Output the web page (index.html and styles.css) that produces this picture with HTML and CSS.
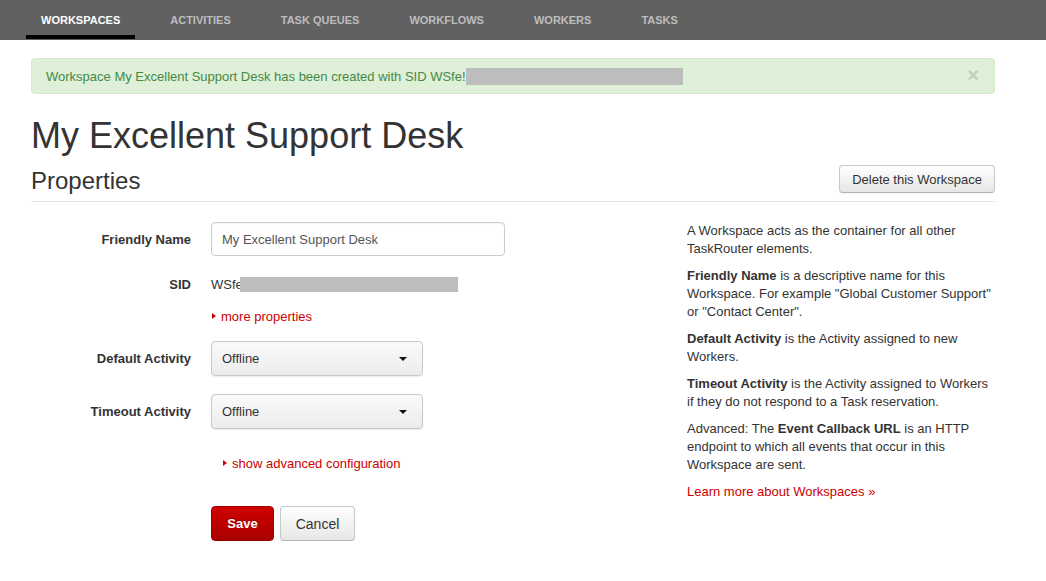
FILE: index.html
```html
<!DOCTYPE html>
<html>
<head>
<meta charset="utf-8">
<link rel="stylesheet" href="styles.css">
</head>
<body>
<nav class="topnav">
  <a class="nav-item active">Workspaces</a>
  <a class="nav-item">Activities</a>
  <a class="nav-item">Task Queues</a>
  <a class="nav-item">Workflows</a>
  <a class="nav-item">Workers</a>
  <a class="nav-item">Tasks</a>
</nav>
<main class="container">
  <div class="alert">
    <span class="alert-text">Workspace My Excellent Support Desk has been created with SID WSfe!</span><span class="redact redact-alert"></span>
    <span class="alert-close">×</span>
  </div>
  <h1 class="title">My Excellent Support Desk</h1>
  <div class="section-head">
    <h2 class="section-title">Properties</h2>
    <button class="btn btn-default btn-delete">Delete this Workspace</button>
  </div>
  <div class="columns">
    <form class="form">
      <div class="row row-name">
        <label class="label">Friendly Name</label>
        <input class="input" type="text" value="My Excellent Support Desk">
      </div>
      <div class="row row-sid">
        <span class="label">SID</span>
        <span class="sid">WSfe<span class="redact redact-sid"></span></span>
      </div>
      <div class="row row-more">
        <span class="label"></span>
        <a class="toggle"><span class="tri"></span>more properties</a>
      </div>
      <div class="row row-default">
        <label class="label">Default Activity</label>
        <div class="select"><span>Offline</span><span class="caret"></span></div>
      </div>
      <div class="row row-timeout">
        <label class="label">Timeout Activity</label>
        <div class="select"><span>Offline</span><span class="caret"></span></div>
      </div>
      <div class="row row-adv">
        <span class="label"></span>
        <a class="toggle toggle-adv"><span class="tri"></span>show advanced configuration</a>
      </div>
      <div class="row row-actions">
        <span class="label"></span>
        <button type="button" class="btn btn-primary">Save</button>
        <button type="button" class="btn btn-default btn-cancel">Cancel</button>
      </div>
    </form>
    <aside class="help">
      <p>A Workspace acts as the container for all other TaskRouter elements.</p>
      <p><b>Friendly Name</b> is a descriptive name for this Workspace. For example "Global Customer Support" or "Contact Center".</p>
      <p><b>Default Activity</b> is the Activity assigned to new Workers.</p>
      <p><b>Timeout Activity</b> is the Activity assigned to Workers if they do not respond to a Task reservation.</p>
      <p>Advanced: The <b>Event Callback URL</b> is an HTTP endpoint to which all events that occur in this Workspace are sent.</p>
      <p><a class="link">Learn more about Workspaces »</a></p>
    </aside>
  </div>
</main>
</body>
</html>
```
FILE: styles.css
```css
* { box-sizing: border-box; }
body {
  margin: 0;
  font-family: "Liberation Sans", Arial, sans-serif;
  font-size: 13px;
  color: #333;
  background: #fff;
}
.topnav {
  height: 40px;
  background: #616161;
  display: flex;
  padding-left: 26px;
}
.nav-item {
  display: block;
  padding: 14px 15px 0;
  margin-right: 20px;
  font-size: 11px;
  font-weight: bold;
  text-transform: uppercase;
  color: #bdbdbd;
  height: 40px;
  line-height: 12px;
}
.nav-item.active {
  color: #fff;
  border-bottom: 4px solid #000;
  height: 39px;
}
.container {
  width: 964px;
  margin-left: 31px;
  padding-top: 18px;
}
.alert {
  position: relative;
  height: 36px;
  background: #dff0d8;
  border: 1px solid #d6e9c6;
  border-radius: 4px;
  color: #468847;
  padding: 0 14px;
  display: flex;
  align-items: center;
}
.redact { display: inline-block; background: #bdbdbd; }
.redact-alert { width: 217px; height: 17px; margin-top: 1px; }
.alert-close {
  position: absolute;
  right: 15px;
  top: 5px;
  font-size: 20px;
  font-weight: bold;
  color: #c3cfbf;
}
.title {
  margin: 20px 0 0;
  font-size: 36px;
  font-weight: normal;
  line-height: 44px;
  color: #333;
}
.section-head {
  display: flex;
  justify-content: space-between;
  align-items: flex-start;
  margin-top: 6px;
  padding-bottom: 5px;
  border-bottom: 1px solid #e5e5e5;
}
.section-title {
  margin: 0;
  padding-top: 2px;
  font-size: 24px;
  font-weight: normal;
  line-height: 30px;
}
.btn {
  font-family: "Liberation Sans", Arial, sans-serif;
  font-size: 13px;
  border-radius: 4px;
  cursor: pointer;
}
.btn-default {
  height: 28px;
  padding: 0 12px;
  color: #333;
  background: linear-gradient(#ffffff, #e6e6e6);
  border: 1px solid #c8c8c8;
  border-bottom-color: #b3b3b3;
  box-shadow: 0 1px 1px rgba(0,0,0,0.05);
}
.btn-delete { margin-top: 1px; }
.columns {
  display: flex;
  margin-top: 20px;
}
.form { width: 656px; }
.row { display: flex; align-items: center; }
.label {
  width: 160px;
  margin-right: 20px;
  text-align: right;
  font-weight: bold;
  color: #333;
}
.input {
  width: 294px;
  height: 34px;
  border: 1px solid #ccc;
  border-radius: 4px;
  padding: 0 10px;
  font-family: "Liberation Sans", Arial, sans-serif;
  font-size: 13px;
  color: #555;
  box-shadow: inset 0 1px 1px rgba(0,0,0,0.05);
}
.row-sid { margin-top: 18px; height: 20px; }
.sid { display: flex; align-items: center; }
.redact-sid { width: 218px; height: 15px; margin-left: -3px; }
.row-more { margin-top: 13px; height: 18px; }
.toggle {
  color: #cc0000;
  display: flex;
  align-items: center;
  margin-left: 1px;
}
.toggle-adv { margin-left: 12px; }
.tri {
  display: inline-block;
  width: 0;
  height: 0;
  border-top: 3.5px solid transparent;
  border-bottom: 3.5px solid transparent;
  border-left: 4px solid #cc0000;
  margin-right: 5px;
}
.select {
  width: 212px;
  height: 35px;
  border: 1px solid #c8c8c8;
  border-radius: 4px;
  background: linear-gradient(#fafafa, #ececec);
  box-shadow: 0 1px 1px rgba(0,0,0,0.08);
  display: flex;
  align-items: center;
  justify-content: space-between;
  padding: 0 15px 0 10px;
  font-size: 13px;
  color: #333;
}
.caret {
  width: 0; height: 0;
  border-left: 4px solid transparent;
  border-right: 4px solid transparent;
  border-top: 4px solid #111;
}
.row-default { margin-top: 16px; }
.row-timeout { margin-top: 18px; }
.row-adv { margin-top: 25px; height: 18px; }
.row-actions { margin-top: 34px; }
.btn-primary {
  height: 35px;
  width: 63px;
  color: #fff;
  font-weight: bold;
  background: linear-gradient(#d00000, #a80000);
  border: 1px solid #9a0000;
  text-shadow: 0 -1px 0 rgba(0,0,0,0.25);
}
.btn-cancel {
  height: 35px;
  width: 75px;
  margin-left: 6px;
  padding: 0;
  font-size: 14px;
}
.help {
  width: 308px;
  line-height: 18px;
  margin-top: 0;
}
.help p { margin: 0 0 9px; }
.link { color: #cc0000; }
```
